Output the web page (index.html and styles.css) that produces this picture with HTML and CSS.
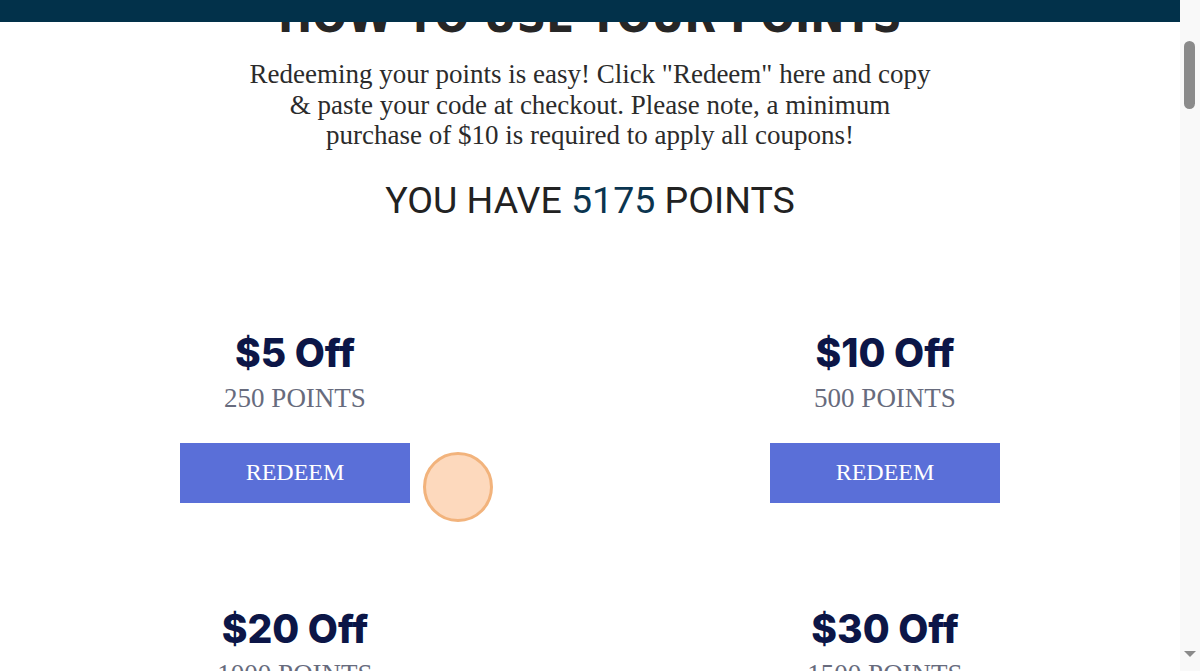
FILE: index.html
```html
<!DOCTYPE html>
<html lang="en">
<head>
    <meta charset="UTF-8">
    <meta name="viewport" content="width=device-width, initial-scale=1.0">
    <title>Rewards - How To Use Your Points</title>
    <link rel="stylesheet" href="styles.css">
</head>
<body>
    <div class="page">
        <div class="main">
            <div class="topbar"></div>

            <div class="content">
                <h1 class="how-title">HOW TO USE YOUR POINTS</h1>
                <p class="intro">
                    Redeeming your points is easy! Click "Redeem" here and copy &amp; paste your code at checkout. Please note, a minimum purchase of $10 is required to apply all coupons!
                </p>
                <h2 class="balance">YOU HAVE <span class="balance-num">5175</span> POINTS</h2>

                <!-- Reward coupons -->
                <div class="rewards">
                    <div class="reward">
                        <div class="reward-title">$5 Off</div>
                        <div class="reward-cost">250 POINTS</div>
                        <button class="redeem-btn">REDEEM</button>
                    </div>
                    <div class="reward">
                        <div class="reward-title">$10 Off</div>
                        <div class="reward-cost">500 POINTS</div>
                        <button class="redeem-btn">REDEEM</button>
                    </div>
                    <div class="reward">
                        <div class="reward-title">$20 Off</div>
                        <div class="reward-cost">1000 POINTS</div>
                        <button class="redeem-btn">REDEEM</button>
                    </div>
                    <div class="reward">
                        <div class="reward-title">$30 Off</div>
                        <div class="reward-cost">1500 POINTS</div>
                        <button class="redeem-btn">REDEEM</button>
                    </div>
                </div>
            </div>

            <div class="click-dot"></div>
        </div>

        <div class="scrollbar">
            <div class="scroll-thumb"></div>
            <div class="scroll-arrow"></div>
        </div>
    </div>
</body>
</html>
```

FILE: styles.css
```css
body {
    margin: 0;
    overflow: hidden;
    background: #ffffff;
    font-family: "Liberation Serif", "Times New Roman", serif;
}
.page {
    display: flex;
    height: 671px;
}
.main {
    position: relative;
    flex: 1;
    overflow: hidden;
}
.topbar {
    position: absolute;
    top: 0;
    left: 0;
    right: 0;
    height: 22px;
    background-color: #02314a;
    z-index: 2;
}
.content {
    display: flex;
    flex-direction: column;
    align-items: center;
}
.how-title {
    margin: -5px 0 0;
    font-family: "DejaVu Sans Condensed", "Liberation Sans Narrow", sans-serif;
    font-weight: bold;
    font-size: 45.5px;
    line-height: 44px;
    color: #262626;
    letter-spacing: 0;
}
.intro {
    max-width: 700px;
    margin: 20px 0 0;
    font-size: 27px;
    line-height: 30.5px;
    text-align: center;
    color: #2b2b2b;
}
.balance {
    margin: 28px 0 0;
    font-family: Roboto, "Noto Sans", sans-serif;
    font-weight: 400;
    font-size: 37.5px;
    line-height: 42px;
    color: #222222;
}
.balance-num {
    color: #0b3550;
}
.rewards {
    align-self: stretch;
    display: grid;
    grid-template-columns: 1fr 1fr;
    row-gap: 103px;
    margin-top: 109px;
}
.reward {
    display: flex;
    flex-direction: column;
    align-items: center;
}
.reward-title {
    font-family: Inter, Roboto, sans-serif;
    font-weight: 800;
    font-size: 39px;
    line-height: 46px;
    color: #0c1647;
}
.reward-cost {
    margin-top: 7px;
    font-size: 27px;
    line-height: 30px;
    color: #676b7d;
}
.redeem-btn {
    width: 230px;
    height: 60px;
    margin-top: 30px;
    border: none;
    background-color: #5a6fd8;
    color: #ffffff;
    font-family: "Liberation Serif", "Times New Roman", serif;
    font-size: 24px;
    cursor: pointer;
}
.click-dot {
    position: absolute;
    left: 423px;
    top: 452px;
    width: 64px;
    height: 64px;
    border-radius: 50%;
    background-color: #fdd9bd;
    border: 3px solid #f2b37c;
    z-index: 3;
}
.scrollbar {
    position: relative;
    width: 20px;
    background-color: #f9f9f9;
}
.scroll-thumb {
    position: absolute;
    left: 4px;
    top: 41px;
    width: 11px;
    height: 68px;
    border-radius: 6px;
    background-color: #8b8b8b;
}
.scroll-arrow {
    position: absolute;
    left: 4px;
    top: 651px;
    width: 0;
    height: 0;
    border-left: 6px solid transparent;
    border-right: 6px solid transparent;
    border-top: 6px solid #8b8b8b;
}
```
